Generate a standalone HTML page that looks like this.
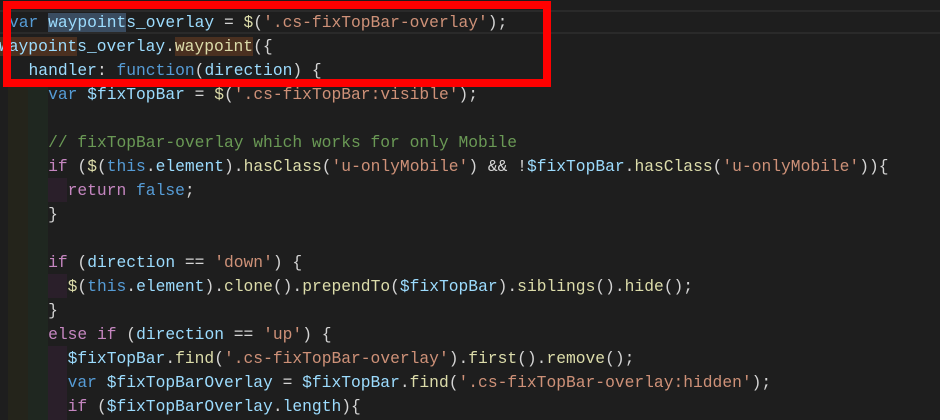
<!DOCTYPE html>
<html><head><meta charset="utf-8"><style>
html,body{margin:0;padding:0;background:#1e1e1e;width:940px;height:420px;overflow:hidden}
.ed{position:relative;width:940px;height:420px;font-family:"Liberation Mono",monospace;font-size:16.3px;}
.l{position:absolute;left:9px;height:24px;line-height:26px;white-space:pre;color:#d4d4d4}
.k{color:#569cd6}.v{color:#9cdcfe}.s{color:#ce9178}.f{color:#dcdcaa}.c{color:#c586c0}.g{color:#6a9955}
.col{position:absolute;}
.hl{background:#4a3020}.sel{background:#3a4c60}
</style></head><body><div class="ed">
<div class="col" style="left:0;top:10px;width:940px;height:24px;border-top:2px solid #2a2a2a;border-bottom:2px solid #2a2a2a;box-sizing:border-box"></div>
<div class="col" style="left:8px;top:82px;width:20px;height:338px;background:#24241b"></div>
<div class="col" style="left:28px;top:82px;width:20px;height:338px;background:#1f2720"></div>
<div class="col" style="left:48px;top:178px;width:19px;height:24px;background:#2a1f2a"></div>
<div class="col" style="left:48px;top:274px;width:19px;height:24px;background:#2a1f2a"></div>
<div class="col" style="left:48px;top:346px;width:19px;height:74px;background:#2a1f2a"></div>
<div class="l" style="top:10px"><span class="k">var</span> <span class="v"><span class="sel">waypoint</span>s_overlay</span> = <span class="f">$</span>(<span class="s">'.cs-fixTopBar-overlay'</span>);</div>
<div class="l" style="top:34px;left:-1px"><span class="v"><span class="hl">waypoint</span>s_overlay</span>.<span class="f hl">waypoint</span>({</div>
<div class="l" style="top:58px"><span class="v">  handler</span>: <span class="k">function</span>(<span class="v">direction</span>) {</div>
<div class="l" style="top:82px">    <span class="k">var</span> <span class="v">$fixTopBar</span> = <span class="f">$</span>(<span class="s">'.cs-fixTopBar:visible'</span>);</div>
<div class="l" style="top:130px">    <span class="g">// fixTopBar-overlay which works for only Mobile</span></div>
<div class="l" style="top:154px">    <span class="c">if</span> (<span class="f">$</span>(<span class="k">this</span>.<span class="v">element</span>).<span class="f">hasClass</span>(<span class="s">'u-onlyMobile'</span>) &amp;&amp; !<span class="v">$fixTopBar</span>.<span class="f">hasClass</span>(<span class="s">'u-onlyMobile'</span>)){</div>
<div class="l" style="top:178px">      <span class="c">return</span> <span class="k">false</span>;</div>
<div class="l" style="top:202px">    }</div>
<div class="l" style="top:250px">    <span class="c">if</span> (<span class="v">direction</span> == <span class="s">'down'</span>) {</div>
<div class="l" style="top:274px">      <span class="f">$</span>(<span class="k">this</span>.<span class="v">element</span>).<span class="f">clone</span>().<span class="f">prependTo</span>(<span class="v">$fixTopBar</span>).<span class="f">siblings</span>().<span class="f">hide</span>();</div>
<div class="l" style="top:298px">    }</div>
<div class="l" style="top:322px">    <span class="c">else</span> <span class="c">if</span> (<span class="v">direction</span> == <span class="s">'up'</span>) {</div>
<div class="l" style="top:346px">      <span class="v">$fixTopBar</span>.<span class="f">find</span>(<span class="s">'.cs-fixTopBar-overlay'</span>).<span class="f">first</span>().<span class="f">remove</span>();</div>
<div class="l" style="top:370px">      <span class="k">var</span> <span class="v">$fixTopBarOverlay</span> = <span class="v">$fixTopBar</span>.<span class="f">find</span>(<span class="s">'.cs-fixTopBar-overlay:hidden'</span>);</div>
<div class="l" style="top:394px">      <span class="c">if</span> (<span class="v">$fixTopBarOverlay</span>.<span class="v">length</span>){</div>
<div class="col" style="left:3px;top:1px;width:548px;height:86px;border:8px solid #ff0000;box-sizing:border-box"></div>
</div></body></html>
